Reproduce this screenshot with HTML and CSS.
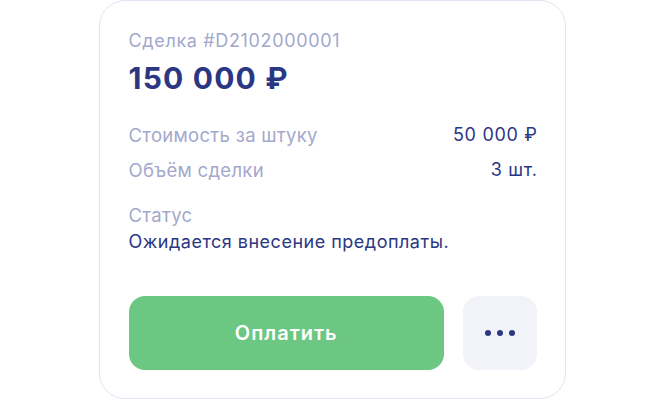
FILE: index.html
```html
<!DOCTYPE html>
<html lang="ru">
<head>
<meta charset="utf-8">
<link rel="stylesheet" href="styles.css">
</head>
<body>
<div class="page">
  <div class="card">
    <div class="deal-id">Сделка #D2102000001</div>
    <div class="total">150 000 ₽</div>
    <div class="rows">
      <div class="row"><span class="label">Стоимость за штуку</span><span class="value">50 000 ₽</span></div>
      <div class="row"><span class="label">Объём сделки</span><span class="value">3 шт.</span></div>
    </div>
    <div class="status">
      <div class="label">Статус</div>
      <div class="status-text">Ожидается внесение предоплаты.</div>
    </div>
    <div class="actions">
      <button class="pay">Оплатить</button>
      <button class="more" aria-label="Ещё"><span class="dot"></span><span class="dot"></span><span class="dot"></span></button>
    </div>
  </div>
</div>
</body>
</html>
```

FILE: styles.css
```css
* { box-sizing: border-box; }
html, body { margin: 0; padding: 0; background: #fff; }
body { font-family: Inter, "Noto Sans", sans-serif; }
.page {
  width: 664px;
  height: 400px;
  display: flex;
  justify-content: center;
}
.card {
  width: 467px;
  height: 399px;
  margin-left: 1px;
  border: 1.5px solid #e2e4f1;
  border-radius: 26px;
  padding: 28px 28px 0 28.5px;
  display: flex;
  flex-direction: column;
}
.deal-id {
  font-size: 18px;
  line-height: 24px;
  letter-spacing: 0.65px;
  color: #a3a8cc;
}
.total {
  margin-top: 7px;
  font-size: 30px;
  line-height: 36px;
  letter-spacing: 1.2px;
  font-weight: 700;
  color: #2b3783;
}
.rows {
  margin-top: 27px;
  display: flex;
  flex-direction: column;
  gap: 11px;
}
.row {
  display: flex;
  justify-content: space-between;
  align-items: center;
  height: 24px;
}
.label {
  display: block;
  color: #a3a8cc;
  font-size: 18.5px;
  line-height: 24px;
  height: 24px;
  letter-spacing: 0.3px;
}
.value {
  color: #2b3783;
  font-size: 18px;
  line-height: 24px;
  letter-spacing: 0.7px;
  margin-right: -0.7px;
}
.status { margin-top: 21px; }
.status-text {
  margin-top: 2.5px;
  font-size: 18px;
  line-height: 24px;
  letter-spacing: 0.5px;
  color: #2b3783;
}
.actions {
  margin-top: 42.5px;
  display: flex;
  gap: 19px;
}
.pay {
  flex: 1;
  height: 74px;
  border: none;
  border-radius: 16px;
  background: #6bc781;
  color: #fff;
  font-family: inherit;
  font-size: 20px;
  font-weight: 600;
  letter-spacing: 1px;
}
.more {
  width: 74px;
  height: 74px;
  border: none;
  border-radius: 16px;
  background: #f2f3f8;
  display: flex;
  align-items: center;
  justify-content: center;
  gap: 6px;
  padding: 0;
}
.dot {
  width: 6px;
  height: 6px;
  border-radius: 50%;
  background: #2b3783;
}
```
